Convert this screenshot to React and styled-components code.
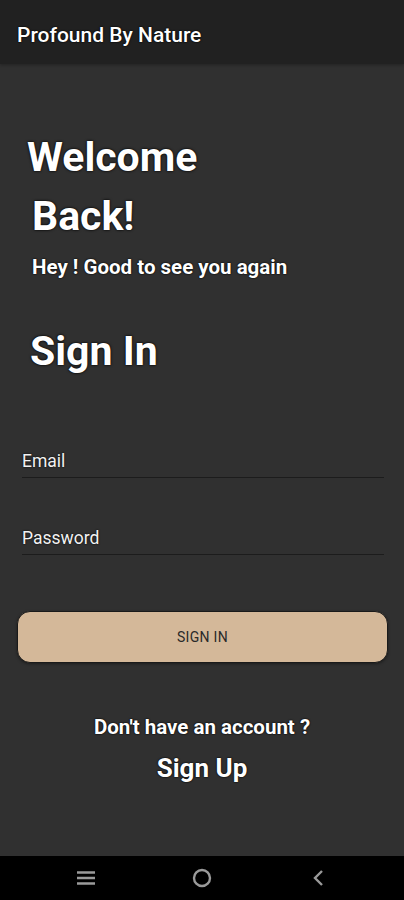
import styled, { createGlobalStyle } from 'styled-components'

const Global = createGlobalStyle`
  * { box-sizing: border-box; }
  html, body { margin: 0; padding: 0; background: #303030; }
  body { font-family: Roboto, 'Noto Sans', sans-serif; }
`

const Screen = styled.div`
  width: 404px;
  height: 900px;
  display: flex;
  flex-direction: column;
  background: #303030;
  color: #fff;
  overflow: hidden;
`

const Header = styled.header`
  height: 64px;
  flex-shrink: 0;
  background: #212121;
  display: flex;
  align-items: center;
  padding-left: 17px;
  box-shadow: 0 1px 3px rgba(0, 0, 0, 0.3);
`

const Title = styled.h1`
  margin: 6px 0 0;
  font-size: 21px;
  font-weight: 500;
  text-shadow: 0 0 2px #000, 0 0 1px #000;
`

const Main = styled.main`
  flex: 1;
  display: flex;
  flex-direction: column;
  padding: 0 16px;
`

const Heading = styled.h2`
  margin: 0;
  padding-left: ${({ $indent }) => $indent || 0}px;
  font-size: 41px;
  font-weight: 700;
  line-height: 1.2;
  text-shadow: 0 0 3px #000, 0 0 1px #000;
`

const Greeting = styled.p`
  margin: 14px 0 0 16px;
  font-size: 20.5px;
  font-weight: 700;
  text-shadow: 0 0 2px #000, 0 0 1px #000;
`

const Field = styled.label`
  display: block;
  margin: 0 4px 0 6px;
  padding-bottom: 6px;
  border-bottom: 1.5px solid #1c1c1c;
  font-size: 17.5px;
  color: #f2f2f2;
  text-shadow: 0 0 2px #000;
`

const Form = styled.div`
  display: flex;
  flex-direction: column;
  gap: 50px;
  margin-top: 74px;
`

const Button = styled.button`
  margin: 56px 0 0 1px;
  height: 52px;
  width: 371px;
  border: 1.5px solid #1a1a1a;
  border-radius: 13px;
  background: #d4b899;
  color: #2a2a2a;
  font-family: Roboto, sans-serif;
  font-size: 14px;
  letter-spacing: 0.3px;
  box-shadow: 0 1px 3px rgba(0, 0, 0, 0.4);
`

const Prompt = styled.p`
  margin: 52px 0 0;
  text-align: center;
  font-size: 20.5px;
  font-weight: 700;
  text-shadow: 0 0 2px #000, 0 0 1px #000;
`

const SignUp = styled.a`
  display: block;
  margin-top: 14px;
  text-align: center;
  font-size: 26px;
  font-weight: 700;
  text-shadow: 0 0 2px #000, 0 0 1px #000;
`

const NavBar = styled.nav`
  height: 44px;
  flex-shrink: 0;
  background: #000;
  display: flex;
  align-items: center;
  justify-content: center;
  gap: 94px;
`

const NavIcon = styled.svg`
  width: 22px;
  height: 22px;
  stroke: #9a9a9a;
  fill: none;
  stroke-width: 2.4;
`

export default function App() {
  return (
    <>
      <Global />
      <Screen>
        <Header>
          <Title>Profound By Nature</Title>
        </Header>
        <Main>
          <Heading $indent={11} style={{ marginTop: 69 }}>Welcome</Heading>
          <Heading $indent={16} style={{ marginTop: 10 }}>Back!</Heading>
          <Greeting>Hey ! Good to see you again</Greeting>
          <Heading $indent={14} style={{ marginTop: 48 }}>Sign In</Heading>
          <Form>
            <Field>Email</Field>
            <Field>Password</Field>
          </Form>
          <Button>SIGN IN</Button>
          <Prompt>Don't have an account ?</Prompt>
          <SignUp>Sign Up</SignUp>
        </Main>
        <NavBar>
          <NavIcon viewBox="0 0 22 22">
            <path d="M2 5.5h18M2 11h18M2 16.5h18" />
          </NavIcon>
          <NavIcon viewBox="0 0 22 22">
            <circle cx="11" cy="11" r="8" />
          </NavIcon>
          <NavIcon viewBox="0 0 22 22">
            <path d="M15 4l-7 7 7 7" />
          </NavIcon>
        </NavBar>
      </Screen>
    </>
  )
}
